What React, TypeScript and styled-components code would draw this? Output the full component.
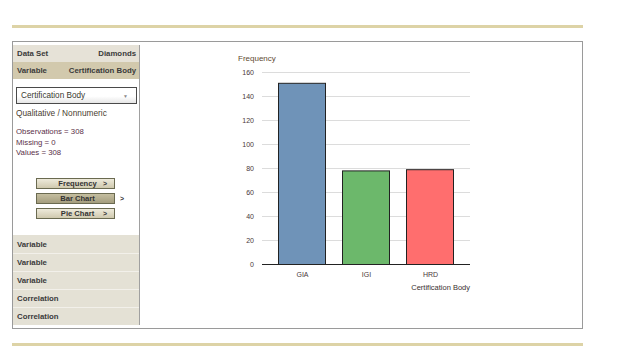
import styled, { createGlobalStyle } from "styled-components";

const GlobalStyle = createGlobalStyle`
    html, body {
        margin: 0;
        padding: 0;
        background: #ffffff;
    }
    body {
        font-family: "Liberation Sans", Arial, sans-serif;
    }
`;

const bars = [
    { label: "GIA", value: 151, color: "#6f93b8" },
    { label: "IGI", value: 78, color: "#6cb86b" },
    { label: "HRD", value: 79, color: "#ff6e6e" },
];

const ticks = [0, 20, 40, 60, 80, 100, 120, 140, 160];

const BarChart = () => {
    const base = 219;
    const scale = 1.2;
    return (
        <ChartSvg width="260" height="250" viewBox="0 0 260 250">
            <text x="18" y="16" fontSize="8" fill="#5e4a32">Frequency</text>
            {ticks.map((t) => (
                <g key={t}>
                    {t > 0 && (
                        <line x1="42" x2="250" y1={base - t * scale + 0.5} y2={base - t * scale + 0.5} stroke="#dcdcdc" strokeWidth="1" />
                    )}
                    <text x="34" y={base - t * scale + 2.5} fontSize="7" fill="#4a3838" textAnchor="end">{t}</text>
                </g>
            ))}
            {bars.map((b, i) => {
                const x = 58.5 + i * 64;
                const h = b.value * scale;
                return (
                    <g key={b.label}>
                        <rect x={x} y={base - h + 0.5} width="47" height={h} fill={b.color} stroke="#222" strokeWidth="1" />
                        <text x={x + 24} y="232" fontSize="7" fill="#4a3838" textAnchor="middle">{b.label}</text>
                    </g>
                );
            })}
            <line x1="42" x2="250" y1={base + 0.5} y2={base + 0.5} stroke="#222" strokeWidth="1" />
            <text x="250" y="245" fontSize="7.5" fill="#3a3030" textAnchor="end">Certification Body</text>
        </ChartSvg>
    );
};

const App = () => {
    return (
        <>
            <GlobalStyle />
            <Page>
                <Rule />
                <Box>
                    <Sidebar>
                        <HeadRow>
                            <span>Data Set</span>
                            <span>Diamonds</span>
                        </HeadRow>
                        <HeadRow $dark>
                            <span>Variable</span>
                            <span>Certification Body</span>
                        </HeadRow>
                        <Body>
                            <Select>
                                <span>Certification Body</span>
                                <Arrow>▼</Arrow>
                            </Select>
                            <TypeText>Qualitative / Nonnumeric</TypeText>
                            <Stats>
                                <div>Observations = 308</div>
                                <div>Missing = 0</div>
                                <div>Values = 308</div>
                            </Stats>
                            <Buttons>
                                <ButtonRow>
                                    <ChartButton>
                                        <span>Frequency</span>
                                        <Chevron>&gt;</Chevron>
                                    </ChartButton>
                                </ButtonRow>
                                <ButtonRow>
                                    <ChartButton $active>
                                        <span>Bar Chart</span>
                                    </ChartButton>
                                    <Outside>&gt;</Outside>
                                </ButtonRow>
                                <ButtonRow>
                                    <ChartButton>
                                        <span>Pie Chart</span>
                                        <Chevron>&gt;</Chevron>
                                    </ChartButton>
                                </ButtonRow>
                            </Buttons>
                        </Body>
                        <NavList>
                            <NavRow>Variable</NavRow>
                            <NavRow>Variable</NavRow>
                            <NavRow>Variable</NavRow>
                            <NavRow>Correlation</NavRow>
                            <NavRow>Correlation</NavRow>
                        </NavList>
                    </Sidebar>
                    <ChartArea>
                        <BarChart />
                    </ChartArea>
                </Box>
                <Rule $bottom />
            </Page>
        </>
    );
};

const Page = styled.div`
    width: 571px;
    padding: 25px 0 0 12px;
`;

const Rule = styled.div<{ $bottom?: boolean }>`
    height: 3px;
    background: #ddd3a6;
    margin-top: ${(p) => (p.$bottom ? "14px" : "0")};
    margin-bottom: ${(p) => (p.$bottom ? "0" : "13px")};
`;

const Box = styled.div`
    display: flex;
    border: 1px solid #9a9a9a;
    padding: 3px 0 3px 0;
    height: 280px;
`;

const Sidebar = styled.div`
    width: 126px;
    border-right: 1px solid #a0a0a0;
    display: flex;
    flex-direction: column;
`;

const HeadRow = styled.div<{ $dark?: boolean }>`
    display: flex;
    justify-content: space-between;
    align-items: center;
    height: 17px;
    padding: 0 3px 0 4px;
    background: ${(p) => (p.$dark ? "#d2c9ad" : "#e6e2d7")};
    font-size: 7.8px;
    font-weight: bold;
    color: #3a3a3a;
`;

const Body = styled.div`
    flex: 1;
    padding: 8px 0 0 3px;
    display: flex;
    flex-direction: column;
`;

const Select = styled.div`
    width: 115px;
    height: 15px;
    border: 1px solid #4a4a4a;
    background: linear-gradient(#ffffff 55%, #e6e6e6);
    display: flex;
    align-items: center;
    justify-content: space-between;
    padding: 0 8px 0 4px;
    box-sizing: content-box;
    width: 107px;
    font-size: 8.2px;
    color: #3a3a30;
`;

const Arrow = styled.span`
    font-size: 5px;
    color: #8a8a8a;
`;

const TypeText = styled.div`
    margin-top: 4px;
    font-size: 8.3px;
    color: #4a4030;
    line-height: 10px;
`;

const Stats = styled.div`
    margin-top: 9px;
    font-size: 7.8px;
    line-height: 10.5px;
    color: #5a3048;
`;

const Buttons = styled.div`
    margin-top: 19px;
    display: flex;
    flex-direction: column;
    gap: 4px;
    padding-left: 20px;
`;

const ButtonRow = styled.div`
    display: flex;
    align-items: center;
    gap: 5px;
`;

const ChartButton = styled.div<{ $active?: boolean }>`
    position: relative;
    width: 77px;
    height: 9px;
    border: 1px solid #6a6a50;
    background: ${(p) =>
        p.$active
            ? "linear-gradient(#c4bea0, #a49d7e)"
            : "linear-gradient(#eeeadb, #cfc9ae)"};
    display: flex;
    align-items: center;
    justify-content: center;
    font-size: 7.6px;
    font-weight: bold;
    color: #333;
    span:first-child {
        margin-left: 4px;
    }
`;

const Chevron = styled.span`
    position: absolute;
    right: 7px;
    font-size: 7px;
`;

const Outside = styled.span`
    font-size: 7px;
    font-weight: bold;
    color: #333;
`;

const NavList = styled.div`
    display: flex;
    flex-direction: column;
`;

const NavRow = styled.div`
    height: 17px;
    display: flex;
    align-items: center;
    padding-left: 4px;
    background: #e4e1d5;
    border-top: 1px solid #f2f0ea;
    font-size: 7.8px;
    font-weight: bold;
    color: #3a3a3a;
    &:first-child {
        border-top: none;
        height: 18px;
    }
`;

const ChartArea = styled.div`
    flex: 1;
    padding-left: 80px;
`;

const ChartSvg = styled.svg`
    display: block;
    font-family: "Liberation Sans", Arial, sans-serif;
`;

export default App;
